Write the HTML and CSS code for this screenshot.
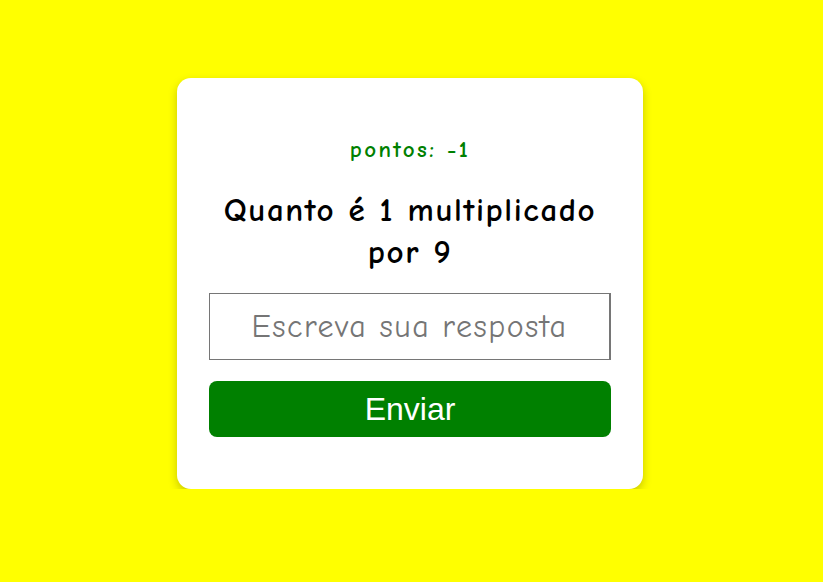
FILE: index.html
```html
<!DOCTYPE html>
<html lang="pt">
<head>
<meta charset="utf-8">
<title>Multiplicação</title>
<link rel="stylesheet" href="styles.css">
</head>
<body>
<main class="page">
  <section class="card">
    <p class="score">pontos: -1</p>
    <h1 class="question">Quanto é 1 multiplicado por 9</h1>
    <input class="answer" type="text" placeholder="Escreva sua resposta">
    <button class="send" type="button">Enviar</button>
  </section>
</main>
</body>
</html>
```
FILE: styles.css
```css
html, body {
  margin: 0;
  padding: 0;
}
body {
  background: #ffff00;
  font-family: "Comic Sans MS", "Comic Neue", cursive;
}
.page {
  display: flex;
  justify-content: center;
  padding: 78px 3px 0 0;
}
.card {
  box-sizing: border-box;
  width: 466px;
  height: 411px;
  background: #fff;
  border-radius: 14px;
  box-shadow: 0 4px 10px rgba(0, 0, 0, 0.22);
  padding: 58px 32px 0;
  display: flex;
  flex-direction: column;
  align-items: stretch;
  text-align: center;
}
.score {
  margin: 0;
  color: #008000;
  font-weight: bold;
  font-size: 23px;
  line-height: 28px;
  letter-spacing: 2.4px;
}
.question {
  margin: 25px 4px 20px;
  font-size: 33px;
  line-height: 42px;
  font-weight: bold;
  letter-spacing: 1.6px;
  color: #000;
}
.answer {
  box-sizing: border-box;
  height: 67px;
  width: 100%;
  font-family: inherit;
  font-size: 32px;
  letter-spacing: 1.5px;
  text-align: center;
  border: 1px solid #767676;
  border-right-width: 2px;
  padding: 0 8px;
  margin: 0;
}
.answer::placeholder {
  color: #757575;
}
.send {
  margin-top: 21px;
  height: 56px;
  width: 100%;
  border: none;
  border-radius: 8px;
  background: #008000;
  color: #fff;
  font-family: Arial, "Liberation Sans", sans-serif;
  font-size: 32px;
}
```
